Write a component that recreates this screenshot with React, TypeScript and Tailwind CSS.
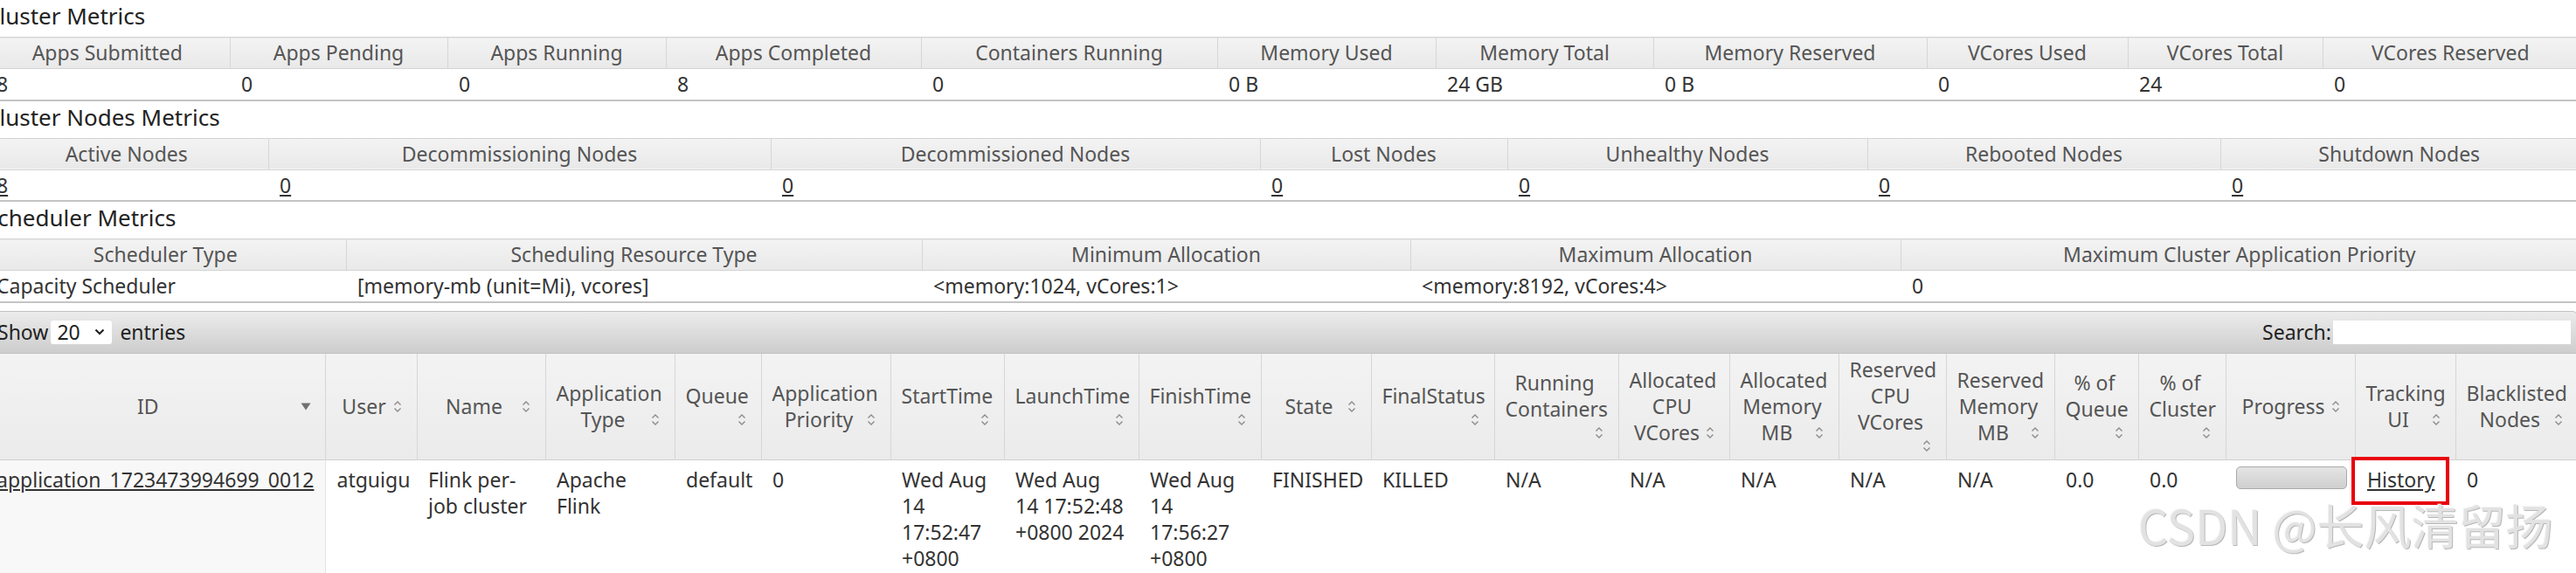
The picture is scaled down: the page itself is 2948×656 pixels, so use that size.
const SortIcon = () => (
  <svg width="12" height="17" viewBox="0 0 12 17" className="shrink-0">
    <path d="M2.5 6.5 L6 3 L9.5 6.5" fill="none" stroke="#8c8c8c" strokeWidth="1.4" />
    <path d="M2.5 10.5 L6 14 L9.5 10.5" fill="none" stroke="#8c8c8c" strokeWidth="1.4" />
  </svg>
);

const SortDesc = () => (
  <svg width="12" height="9" viewBox="0 0 12 9" className="shrink-0">
    <path d="M0.5 0.5 H11.5 L6 8.5 Z" fill="#707070" />
  </svg>
);

type Metric = { label: string; w: string; v: string };

const clusterMetrics: Metric[] = [
  { label: 'Apps Submitted', w: 'w-[280px]', v: '8' },
  { label: 'Apps Pending', w: 'w-[249px]', v: '0' },
  { label: 'Apps Running', w: 'w-[250px]', v: '0' },
  { label: 'Apps Completed', w: 'w-[292px]', v: '8' },
  { label: 'Containers Running', w: 'w-[339px]', v: '0' },
  { label: 'Memory Used', w: 'w-[250px]', v: '0 B' },
  { label: 'Memory Total', w: 'w-[249px]', v: '24 GB' },
  { label: 'Memory Reserved', w: 'w-[313px]', v: '0 B' },
  { label: 'VCores Used', w: 'w-[230px]', v: '0' },
  { label: 'VCores Total', w: 'w-[223px]', v: '24' },
  { label: 'VCores Reserved', w: 'w-[292px]', v: '0' },
];

const nodeMetrics: Metric[] = [
  { label: 'Active Nodes', w: 'w-[324px]', v: '8' },
  { label: 'Decommissioning Nodes', w: 'w-[575px]', v: '0' },
  { label: 'Decommissioned Nodes', w: 'w-[560px]', v: '0' },
  { label: 'Lost Nodes', w: 'w-[283px]', v: '0' },
  { label: 'Unhealthy Nodes', w: 'w-[412px]', v: '0' },
  { label: 'Rebooted Nodes', w: 'w-[404px]', v: '0' },
  { label: 'Shutdown Nodes', w: 'w-[409px]', v: '0' },
];

const schedulerMetrics: Metric[] = [
  { label: 'Scheduler Type', w: 'w-[413px]', v: 'Capacity Scheduler' },
  { label: 'Scheduling Resource Type', w: 'w-[659px]', v: '[memory-mb (unit=Mi), vcores]' },
  { label: 'Minimum Allocation', w: 'w-[559px]', v: '<memory:1024, vCores:1>' },
  { label: 'Maximum Allocation', w: 'w-[561px]', v: '<memory:8192, vCores:4>' },
  { label: 'Maximum Cluster Application Priority', w: 'w-[775px]', v: '0' },
];

function MetricBlock({ title, items, links }: { title: string; items: Metric[]; links?: boolean }) {
  return (
    <section>
      <h3 className="h-[42px] pt-[5px] text-[26px] leading-none font-normal text-[#222]">{title}</h3>
      <table className="w-full table-fixed border-collapse">
        <colgroup>
          {items.map((m) => (
            <col key={m.label} className={m.w} />
          ))}
        </colgroup>
        <thead>
          <tr className="h-[36px] bg-gradient-to-b from-[#f3f3f3] to-[#e9e9e9] border-t border-[#c6c6c6] border-b border-[#d4d4d4]">
            {items.map((m, i) => (
              <th
                key={m.label}
                className={`font-normal text-[#555] text-center whitespace-nowrap ${i > 0 ? 'border-l border-[#d6d6d6]' : ''}`}
              >
                {m.label}
              </th>
            ))}
          </tr>
        </thead>
        <tbody>
          <tr className="h-[35px] border-b-2 border-[#c4c4c4]">
            {items.map((m) => (
              <td key={m.label} className="pl-[13px] text-left text-[#333] whitespace-nowrap">
                {links ? <span className="underline">{m.v}</span> : m.v}
              </td>
            ))}
          </tr>
        </tbody>
      </table>
    </section>
  );
}

type AppCol = { w: string; lines: string[]; own?: boolean; desc?: boolean };

const appCols: AppCol[] = [
  { w: 'w-[389px]', lines: ['ID'], desc: true },
  { w: 'w-[105px]', lines: ['User'] },
  { w: 'w-[147px]', lines: ['Name'] },
  { w: 'w-[148px]', lines: ['Application', 'Type'] },
  { w: 'w-[99px]', lines: ['Queue'], own: true },
  { w: 'w-[148px]', lines: ['Application', 'Priority'] },
  { w: 'w-[130px]', lines: ['StartTime'], own: true },
  { w: 'w-[154px]', lines: ['LaunchTime'], own: true },
  { w: 'w-[140px]', lines: ['FinishTime'], own: true },
  { w: 'w-[126px]', lines: ['State'] },
  { w: 'w-[141px]', lines: ['FinalStatus'], own: true },
  { w: 'w-[142px]', lines: ['Running', 'Containers'], own: true },
  { w: 'w-[127px]', lines: ['Allocated', 'CPU', 'VCores'] },
  { w: 'w-[125px]', lines: ['Allocated', 'Memory', 'MB'] },
  { w: 'w-[123px]', lines: ['Reserved', 'CPU', 'VCores'], own: true },
  { w: 'w-[124px]', lines: ['Reserved', 'Memory', 'MB'] },
  { w: 'w-[96px]', lines: ['% of', 'Queue'], own: true },
  { w: 'w-[100px]', lines: ['% of', 'Cluster'], own: true },
  { w: 'w-[148px]', lines: ['Progress'] },
  { w: 'w-[115px]', lines: ['Tracking', 'UI'] },
  { w: 'w-[140px]', lines: ['Blacklisted', 'Nodes'] },
];

const rowCells: string[][] = [
  ['application_1723473994699_0012'],
  ['atguigu'],
  ['Flink per-', 'job cluster'],
  ['Apache', 'Flink'],
  ['default'],
  ['0'],
  ['Wed Aug', '14', '17:52:47', '+0800', '2024'],
  ['Wed Aug', '14 17:52:48', '+0800 2024'],
  ['Wed Aug', '14', '17:56:27', '+0800', '2024'],
  ['FINISHED'],
  ['KILLED'],
  ['N/A'],
  ['N/A'],
  ['N/A'],
  ['N/A'],
  ['N/A'],
  ['0.0'],
  ['0.0'],
  [],
  [],
  ['0'],
];

function AppHeader({ col, first }: { col: AppCol; first: boolean }) {
  const last = col.lines[col.lines.length - 1];
  const rest = col.lines.slice(0, -1);
  return (
    <th
      className={`h-[122px] pl-[12px] pr-[16px] align-middle font-normal text-[#555] leading-[30px] ${
        first ? '' : 'border-l border-[#d6d6d6]'
      }`}
    >
      {rest.map((l) => (
        <div key={l} className="text-center whitespace-nowrap">
          {l}
        </div>
      ))}
      {col.own ? (
        <>
          <div className="text-center whitespace-nowrap">{last}</div>
          <div className="flex justify-end h-[24px] items-center">
            <SortIcon />
          </div>
        </>
      ) : (
        <div className="flex items-center">
          <span className="flex-1 text-center whitespace-nowrap">{last}</span>
          {col.desc ? <SortDesc /> : <SortIcon />}
        </div>
      )}
    </th>
  );
}

function AppsTable() {
  return (
    <table className="w-full table-fixed border-collapse">
      <colgroup>
        {appCols.map((c, i) => (
          <col key={i} className={c.w} />
        ))}
      </colgroup>
      <thead>
        <tr className="bg-gradient-to-b from-[#f3f3f3] to-[#ebebeb] border-b border-[#d0d0d0]">
          {appCols.map((c, i) => (
            <AppHeader key={i} col={c} first={i === 0} />
          ))}
        </tr>
      </thead>
      <tbody>
        <tr className="align-top">
          {rowCells.map((lines, i) => {
            if (i === 18) {
              return (
                <td key={i} className="pl-[12px] pt-[7px]">
                  <div className="w-[127px] h-[26px] rounded-[5px] border border-[#aaa] bg-gradient-to-b from-[#e4e4e4] to-[#cfcfcf]" />
                </td>
              );
            }
            if (i === 19) {
              return (
                <td key={i} className="relative pl-[14px] pt-[7px] leading-[30px] text-[#333]">
                  <span className="underline">History</span>
                  <div className="absolute left-[-4px] top-[-4px] w-[112px] h-[55px] border-[4px] border-[#e8000b]" />
                </td>
              );
            }
            return (
              <td
                key={i}
                className={`pl-[13px] pt-[7px] leading-[30px] text-[#333] whitespace-nowrap ${
                  i === 0 ? 'bg-[#f8f8f8] border-r border-[#e4e4e4]' : ''
                }`}
              >
                {lines.map((l, j) => (
                  <div key={j} className={i === 0 ? 'underline' : ''}>
                    {l}
                  </div>
                ))}
              </td>
            );
          })}
        </tr>
      </tbody>
    </table>
  );
}

function Toolbar() {
  return (
    <div className="mt-[9px] h-[49px] rounded-t-[6px] border border-[#c2c2c2] bg-gradient-to-b from-[#ececec] to-[#cdcdcd] flex items-center justify-between pl-[13px] pr-[7px] text-[#222]">
      <div className="flex items-center">
        <span>Show</span>
        <div className="ml-[3px] w-[70px] h-[27px] bg-white rounded-[3px] flex items-center justify-between pl-[7px] pr-[8px]">
          <span>20</span>
          <svg width="12" height="8" viewBox="0 0 12 8">
            <path d="M1.5 1.5 L6 6 L10.5 1.5" fill="none" stroke="#222" strokeWidth="2.2" />
          </svg>
        </div>
        <span className="ml-[9px]">entries</span>
      </div>
      <div className="flex items-center">
        <span>Search:</span>
        <div className="ml-[2px] w-[272px] h-[27px] bg-white" />
      </div>
    </div>
  );
}

export default function App() {
  return (
    <div className="relative w-[2948px] h-[656px] overflow-hidden bg-white text-[23px] leading-normal font-['Noto_Sans',sans-serif]">
      <div className="ml-[-17px] w-[2967px]">
        <MetricBlock title="Cluster Metrics" items={clusterMetrics} />
        <MetricBlock title="Cluster Nodes Metrics" items={nodeMetrics} links />
        <MetricBlock title="Scheduler Metrics" items={schedulerMetrics} />
        <Toolbar />
        <AppsTable />
      </div>
      <div className="absolute left-[2447px] top-[574px] text-[54px] leading-none whitespace-nowrap text-[#e2e2e2] [text-shadow:1px_1px_0_#b8b8b8,-1px_-1px_0_#f4f4f4] font-['Noto_Sans_CJK_SC',sans-serif]">
        CSDN @长风清留扬
      </div>
    </div>
  );
}
